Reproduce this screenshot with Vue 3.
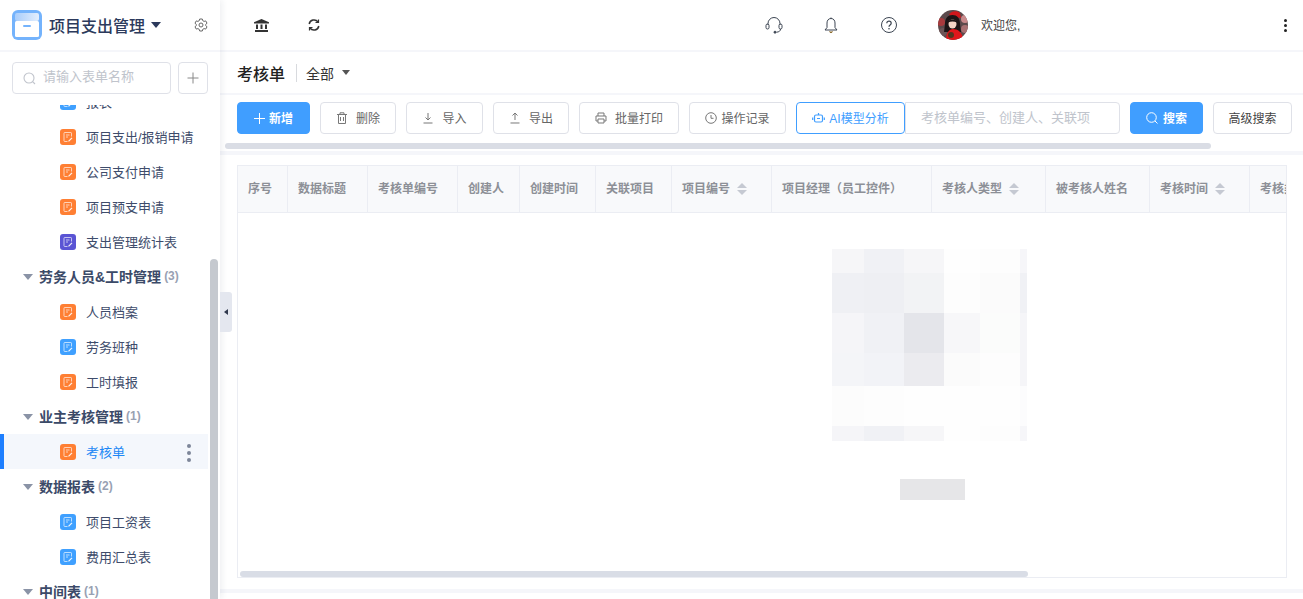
<script setup>
const menu = [
  { type: 'item', name: '报表', color: 'blue' },
  { type: 'item', name: '项目支出/报销申请', color: 'orange' },
  { type: 'item', name: '公司支付申请', color: 'orange' },
  { type: 'item', name: '项目预支申请', color: 'orange' },
  { type: 'item', name: '支出管理统计表', color: 'purple' },
  { type: 'group', name: '劳务人员&工时管理', count: 3 },
  { type: 'item', name: '人员档案', color: 'orange' },
  { type: 'item', name: '劳务班种', color: 'blue' },
  { type: 'item', name: '工时填报', color: 'orange' },
  { type: 'group', name: '业主考核管理', count: 1 },
  { type: 'item', name: '考核单', color: 'orange', active: true },
  { type: 'group', name: '数据报表', count: 2 },
  { type: 'item', name: '项目工资表', color: 'blue' },
  { type: 'item', name: '费用汇总表', color: 'blue' },
  { type: 'group', name: '中间表', count: 1 },
]

const columns = [
  { name: '序号', width: 50 },
  { name: '数据标题', width: 80 },
  { name: '考核单编号', width: 90 },
  { name: '创建人', width: 62 },
  { name: '创建时间', width: 76 },
  { name: '关联项目', width: 76 },
  { name: '项目编号', width: 100, sort: true },
  { name: '项目经理（员工控件）', width: 160 },
  { name: '考核人类型', width: 114, sort: true },
  { name: '被考核人姓名', width: 104 },
  { name: '考核时间', width: 100, sort: true },
  { name: '考核类型', width: 100 },
]

const mosaic = [
  '#f6f6f8', '#f0f1f5', '#f6f6f8', '#fefefe', '#fdfdfd', '#f6f6f9',
  '#eff0f4', '#eeeff3', '#f2f3f5', '#fdfdfd', '#fbfbfb', '#f0f1f5',
  '#f5f5f8', '#f0f1f5', '#e4e5ea', '#f7f7f9', '#fbfcfb', '#f5f5f8',
  '#f4f5f8', '#f2f3f7', '#ebebef', '#fbfbfb', '#fdfdfd', '#f5f5f8',
  '#fcfcfc', '#fdfdfd', '#fefefe', '#fefefe', '#fefefe', '#fcfcfd',
  '#f5f5f8', '#f0f1f5', '#f6f6f8', '#fefefe', '#fdfdfd', '#f6f6f9',
]
</script>

<template>
  <div class="page">
    <aside class="sidebar">
      <div class="brand">
        <svg class="logo" width="30" height="30" viewBox="0 0 30 30">
          <defs>
            <linearGradient id="logoTop" x1="0" y1="0" x2="1" y2="0">
              <stop offset="0" stop-color="#a9cdfb" />
              <stop offset="1" stop-color="#e3eefd" />
            </linearGradient>
          </defs>
          <rect width="30" height="30" rx="6" fill="#74b3fc" />
          <rect x="3" y="3" width="24" height="8" rx="2" fill="url(#logoTop)" />
          <rect x="3" y="11" width="24" height="16" rx="1.500" fill="#fff" />
          <rect x="11" y="15" width="8" height="2" rx="1" fill="#74b3fc" />
        </svg>
        <span class="brand-name">项目支出管理</span>
        <i class="caret dark"></i>
        <svg class="gear" width="14" height="14" viewBox="0 0 14 14" fill="none" stroke="#666" stroke-width="1">
          <path d="M5.700 1h2.600l.4 1.600 1.400.8 1.600-.5 1.300 2.200-1.200 1.200v1.400l1.200 1.200-1.300 2.200-1.600-.5-1.400.8L8.300 13H5.700l-.4-1.600-1.400-.8-1.600.5L1 8.900l1.200-1.200V6.300L1 5.100l1.300-2.200 1.600.5 1.400-.8z" />
          <circle cx="7" cy="7" r="2" />
        </svg>
      </div>

      <div class="search-row">
        <label class="side-search">
          <svg width="13" height="13" viewBox="0 0 13 13" fill="none" stroke="#c0c4cc" stroke-width="1.100">
            <circle cx="6" cy="6" r="5" />
            <path d="M9.600 9.600l2.400 2.400" />
          </svg>
          <input placeholder="请输入表单名称" />
        </label>
        <button class="add-btn">
          <svg width="12" height="12" viewBox="0 0 12 12" stroke="#888" stroke-width="1">
            <path d="M6 .5v11M.5 6h11" />
          </svg>
        </button>
      </div>

      <div class="menu">
        <div class="menu-inner">
          <template v-for="row in menu" :key="row.name">
            <div v-if="row.type === 'group'" class="group">
              <i class="caret gray"></i>
              <span class="group-name">{{ row.name }}</span>
              <span class="group-count">({{ row.count }})</span>
            </div>
            <div v-else class="item" :class="{ active: row.active }">
              <span class="doc" :class="row.color">
                <svg width="10" height="10" viewBox="0 0 10 10" fill="none" stroke="#fff" stroke-opacity=".65" stroke-width="1">
                  <path d="M8.500 4.500V1.200a.7.7 0 0 0-.7-.7H1.700a.7.7 0 0 0-.7.7v7.600c0 .4.300.7.700.7H4.500" />
                  <path d="M3 3h3.500M3 5h2" />
                  <path d="M5.500 9.300l3.500-3.500" stroke-opacity=".9" stroke-width="1.200" />
                </svg>
              </span>
              <span class="item-name">{{ row.name }}</span>
              <span v-if="row.active" class="dots"><b></b><b></b><b></b></span>
            </div>
          </template>
        </div>
      </div>

      <div class="side-thumb"></div>
      <div class="collapse"><i></i></div>
    </aside>

    <main class="main">
      <header class="topbar">
        <div class="top-left">
          <svg width="15" height="13" viewBox="0 0 15 13" fill="#333">
            <path d="M7.500 0L15 3.200V4.500H0V3.200z" />
            <path d="M2 5.500h2v4.500H2zM6.500 5.500h2v4.500h-2zM11 5.500h2v4.500h-2zM1 11h13v2H1z" />
          </svg>
          <svg width="12" height="12" viewBox="0 0 12 12" fill="none" stroke="#333" stroke-width="1.500">
            <path d="M1.200 5A4.900 4.900 0 0 1 10 3M10.800 7A4.900 4.900 0 0 1 2 9" />
            <path d="M10.500.5v3H7.500M1.500 11.500v-3h3" stroke-width="1.200" />
          </svg>
        </div>
        <div class="top-right">
          <svg width="18" height="18" viewBox="0 0 18 18" fill="none" stroke="#3c4552" stroke-width="1">
            <path d="M3 9V7.500a6 6 0 0 1 12 0V9" />
            <rect x="1" y="8" width="3" height="5" rx="1.500" />
            <rect x="14" y="8" width="3" height="5" rx="1.500" />
            <path d="M15.500 13c0 2-1.500 3-4 3.200" />
            <circle cx="10" cy="16.200" r="1" fill="#3c4552" />
          </svg>
          <svg class="bell" width="16" height="17" viewBox="0 0 16 17" fill="none" stroke="#3c4552" stroke-width="1">
            <path d="M8 1.500c-2.600 0-4 2-4 4.500v4.500L2 13h12l-2-2.500V6c0-2.500-1.400-4.500-4-4.500z" />
            <path d="M8 .5v1" />
            <path d="M6.500 14.500c.3.800.8 1.200 1.500 1.200s1.200-.4 1.500-1.200" fill="#8a6a2d" stroke="#8a6a2d" />
          </svg>
          <svg class="help" width="16" height="16" viewBox="0 0 16 16" fill="none" stroke="#3c4552" stroke-width="1">
            <circle cx="8" cy="8" r="7.500" />
            <path d="M5.800 6.200C5.800 5 6.800 4.200 8 4.200s2.200.8 2.200 2c0 1.800-2.200 1.700-2.200 3.500" stroke-width="1.200" />
            <circle cx="8" cy="11.700" r=".8" fill="#3c4552" stroke="none" />
          </svg>
          <div class="user">
            <svg width="30" height="30" viewBox="0 0 30 30">
              <defs>
                <clipPath id="avatarClip"><circle cx="15" cy="15" r="15" /></clipPath>
              </defs>
              <g clip-path="url(#avatarClip)">
                <rect width="30" height="30" fill="#5c4a4c" />
                <circle cx="3" cy="12" r="4" fill="#a83a3d" />
                <circle cx="5" cy="22" r="4" fill="#6d5557" />
                <circle cx="27" cy="9" r="4" fill="#c98a8c" />
                <circle cx="27" cy="19" r="4" fill="#a87072" />
                <path d="M11 5c1-4 8-5 11-2l1 5-7-1z" fill="#d0171c" />
                <path d="M7 14c0-6 3-9 7.500-9S22 8 22 14l1 8H6z" fill="#1d1516" />
                <ellipse cx="14.500" cy="14" rx="4" ry="4.500" fill="#f3d4c5" />
                <path d="M10 12.500c1-4 8-4 9 0-3-1.500-6-1.500-9 0z" fill="#1d1516" />
                <path d="M8 30c0-7 3-11 7-11s10 3 10 11z" fill="#e0161b" />
                <circle cx="13" cy="25" r="3" fill="#54351f" />
              </g>
            </svg>
            <span class="welcome">欢迎您,</span>
          </div>
        </div>
        <span class="top-more"><b></b><b></b><b></b></span>
      </header>

      <div class="title-row">
        <h1>考核单</h1>
        <span class="title-line"></span>
        <span class="scope">全部</span>
        <i class="caret mid"></i>
      </div>

      <div class="toolbar">
        <button class="btn primary add">
          <svg width="11" height="11" viewBox="0 0 11 11" stroke="#fff" stroke-width="1"><path d="M5.500 0v11M0 5.500h11" /></svg>
          <span>新增</span>
        </button>
        <button class="btn">
          <svg width="12" height="12" viewBox="0 0 12 12" fill="none" stroke="#777" stroke-width="1"><path d="M2.500 3v8.500h7V3M1 2.500h10M4 2.500V.8h4v1.700M4.500 5v4M7.500 5v4" /></svg>
          <span>删除</span>
        </button>
        <button class="btn">
          <svg width="12" height="12" viewBox="0 0 12 12" fill="none" stroke="#777" stroke-width="1"><path d="M6 1v7M3.500 5.500L6 8l2.500-2.500M1.500 11h9" /></svg>
          <span>导入</span>
        </button>
        <button class="btn">
          <svg width="12" height="12" viewBox="0 0 12 12" fill="none" stroke="#777" stroke-width="1"><path d="M6 8V1M3.500 3.500L6 1l2.500 2.500M1.500 11h9" /></svg>
          <span>导出</span>
        </button>
        <button class="btn">
          <svg width="12" height="12" viewBox="0 0 12 12" fill="none" stroke="#777" stroke-width="1"><path d="M3 4V1h6v3M3 9H1V4h10v5H9M3 7h6v4H3z" /></svg>
          <span>批量打印</span>
        </button>
        <button class="btn tight">
          <svg width="12" height="12" viewBox="0 0 12 12" fill="none" stroke="#777" stroke-width="1"><circle cx="6" cy="6" r="5.300" /><path d="M6 3v3.300h2.500" /></svg>
          <span>操作记录</span>
        </button>
        <button class="btn ai tight">
          <svg width="13" height="12" viewBox="0 0 13 12" fill="none" stroke="#409eff" stroke-width="1.200"><rect x="2.500" y="3" width="8" height="7" rx="1.500" /><path d="M6.500 1v2M.7 5.500v2.500M12.300 5.500v2.500M5 6.500h3" /></svg>
          <span>AI模型分析</span>
        </button>
        <input class="query" placeholder="考核单编号、创建人、关联项" />
        <button class="btn primary search">
          <svg width="12" height="12" viewBox="0 0 12 12" fill="none" stroke="#fff" stroke-width="1"><circle cx="5.500" cy="5.500" r="4.800" /><path d="M9 9l2.500 2.500" /></svg>
          <span>搜索</span>
        </button>
        <button class="btn advanced"><span>高级搜索</span></button>
      </div>

      <div class="bar-scroll"></div>
      <div class="divider"></div>

      <section class="table">
        <div class="thead">
          <div v-for="col in columns" :key="col.name" class="th" :style="{ width: col.width + 'px' }">
            <span class="th-name">{{ col.name }}</span>
            <span v-if="col.sort" class="sort"><i></i><i></i></span>
          </div>
        </div>
        <div class="empty">
          <div class="mosaic">
            <span v-for="(c, i) in mosaic" :key="i" :style="{ background: c }"></span>
          </div>
          <div class="empty-text"></div>
        </div>
        <div class="table-scroll"></div>
      </section>

      <div class="foot-line"></div>
    </main>
  </div>
</template>

<style>
html, body { margin: 0; height: 100%; overflow: hidden; background: #fff; }
</style>

<style scoped>
.page {
  display: flex;
  width: 1303px;
  height: 599px;
  overflow: hidden;
  font-family: "Liberation Sans", "Noto Sans CJK SC", sans-serif;
  font-size: 12px;
  color: #333;
}
button, input { font-family: inherit; }

.sidebar {
  position: relative;
  flex: 0 0 220px;
  display: flex;
  flex-direction: column;
  background: #fff;
  box-shadow: 2px 0 6px rgba(40, 50, 80, .08);
  z-index: 2;
}
.brand {
  display: flex;
  align-items: center;
  height: 50px;
  padding: 0 12px;
  border-bottom: 2px solid #f5f6fa;
}
.brand-name {
  margin-left: 7px;
  font-size: 16px;
  font-weight: 500;
  color: #2c3a5c;
}
.caret {
  display: block;
  width: 0;
  height: 0;
  border-left: 5px solid transparent;
  border-right: 5px solid transparent;
}
.caret.dark { border-top: 6px solid #2c3a5c; margin-left: 6px; }
.caret.gray { border-top: 6px solid #8a93a6; }
.caret.mid { border-top: 5px solid #555; margin-left: 8px; border-left-width: 4px; border-right-width: 4px; }
.gear { margin-left: auto; }

.search-row {
  display: flex;
  gap: 7px;
  padding: 10px 12px 11px;
}
.side-search {
  display: flex;
  align-items: center;
  gap: 7px;
  box-sizing: border-box;
  width: 159px;
  height: 32px;
  padding: 0 10px;
  border: 1px solid #dfe1e8;
  border-radius: 4px;
}
.side-search input {
  width: 100px;
  padding: 0 0 3px;
  border: 0;
  outline: 0;
  font-size: 13px;
}
input::placeholder { color: #c0c4cc; }
.add-btn {
  display: flex;
  align-items: center;
  justify-content: center;
  width: 30px;
  height: 32px;
  padding: 0;
  background: #fff;
  border: 1px solid #dfe1e8;
  border-radius: 4px;
}

.menu { flex: 1; overflow: hidden; }
.menu-inner { margin-top: -21px; }
.item, .group {
  display: flex;
  align-items: center;
  height: 35px;
}
.group { padding-left: 23px; }
.group-name {
  margin-left: 6px;
  padding-bottom: 2px;
  font-size: 14px;
  font-weight: 700;
  color: #3b4a68;
}
.group-count {
  margin-left: 3px;
  padding-bottom: 1px;
  font-size: 12px;
  font-weight: 700;
  color: #98a1b3;
}
.item { position: relative; width: 208px; padding-left: 60px; box-sizing: border-box; }
.item.active { background: #f4f7fc; box-shadow: inset 4px 0 0 #1e7fff; }
.item.active .item-name { color: #1e88f5; }
.doc {
  display: flex;
  align-items: center;
  justify-content: center;
  width: 16px;
  height: 16px;
  border-radius: 3px;
}
.doc.orange { background: #ff7f33; }
.doc.blue { background: #3fa0ff; }
.doc.purple { background: #5a54d4; }
.item-name {
  margin-left: 10px;
  padding-bottom: 1px;
  font-size: 13px;
  color: #3e4c6b;
}
.dots {
  position: absolute;
  right: 17px;
  top: 10px;
  display: flex;
  flex-direction: column;
  gap: 3px;
}
.dots b { width: 4px; height: 4px; border-radius: 50%; background: #7d8699; }
.side-thumb {
  position: absolute;
  left: 210px;
  top: 259px;
  bottom: -10px;
  width: 8px;
  border-radius: 4px;
  background: #c5c9cf;
}
.collapse {
  position: absolute;
  left: 220px;
  top: 292px;
  display: flex;
  align-items: center;
  justify-content: center;
  width: 12px;
  height: 40px;
  background: #e4e7ef;
  border-radius: 0 3px 3px 0;
}
.collapse i {
  width: 0;
  height: 0;
  border-top: 3px solid transparent;
  border-bottom: 3px solid transparent;
  border-right: 4px solid #30394d;
}

.main {
  flex: 1;
  min-width: 0;
  display: flex;
  flex-direction: column;
}
.topbar {
  display: flex;
  align-items: center;
  flex: 0 0 50px;
  border-bottom: 2px solid #f5f6fa;
  position: relative;
}
.top-left {
  display: flex;
  align-items: center;
  gap: 39px;
  padding-left: 34px;
}
.top-right {
  display: flex;
  align-items: center;
  margin-left: 445px;
  gap: 41px;
}
.bell { margin-left: -1px; }
.help { margin-left: 1px; }
.user {
  display: flex;
  align-items: center;
  gap: 13px;
}
.welcome { padding-bottom: 2px; font-size: 12px; color: #444; }
.top-more {
  position: absolute;
  right: 16px;
  top: 19px;
  display: flex;
  flex-direction: column;
  gap: 2px;
}
.top-more b { width: 3px; height: 3px; border-radius: 50%; background: #222; }

.title-row {
  display: flex;
  align-items: center;
  height: 41px;
  padding-left: 17px;
  border-bottom: 2px solid #f5f6fa;
}
h1 {
  margin: 0;
  font-size: 16px;
  font-weight: 500;
  color: #222;
}
.title-line { width: 1px; height: 18px; margin: 0 9px 0 11px; background: #d8dade; }
.scope { font-size: 14px; color: #333; }

.toolbar {
  display: flex;
  padding: 7px 0 0 17px;
  gap: 10px;
}
.btn {
  display: flex;
  align-items: center;
  justify-content: center;
  gap: 8px;
  box-sizing: border-box;
  height: 32px;
  padding: 0 15px;
  background: #fff;
  border: 1px solid #dfe1e8;
  border-radius: 4px;
  font-size: 12px;
  color: #666;
  white-space: nowrap;
}
.btn span { padding-bottom: 2px; }
.btn:nth-child(2) { width: 76px; }
.btn:nth-child(3) { width: 77px; }
.btn:nth-child(4) { width: 76px; }
.btn:nth-child(5) { width: 100px; }
.btn:nth-child(6) { width: 97px; }
.btn.tight { gap: 4px; }
.btn.primary { background: #409eff; border-color: #409eff; color: #fff; font-weight: 700; }
.btn.primary.add { width: 73px; gap: 4px; }
.btn.ai { width: 109px; border-color: #409eff; color: #409eff; }
.btn.primary.search { width: 73px; gap: 5px; }
.btn.advanced { width: 79px; color: #444; }
.query {
  box-sizing: border-box;
  width: 215px;
  height: 32px;
  margin-left: -10px;
  padding: 0 15px 2px;
  background: #fff;
  border: 1px solid #dfe1e8;
  border-radius: 0 4px 4px 0;
  outline: 0;
  font-size: 13px;
}

.bar-scroll {
  width: 986px;
  height: 6px;
  margin: 9px 0 0 5px;
  background: #dadde5;
  border-radius: 3px;
}
.divider {
  height: 4px;
  margin-top: 2px;
  background: #f5f6fa;
}

.table {
  position: relative;
  box-sizing: border-box;
  width: 1050px;
  height: 413px;
  margin: 10px 0 0 17px;
  border: 1px solid #ebedf3;
  overflow: hidden;
}
.thead {
  display: flex;
  width: 1200px;
  height: 46px;
  background: #f8f9fb;
  border-bottom: 1px solid #ebedf3;
}
.th {
  display: flex;
  align-items: center;
  flex: none;
  box-sizing: border-box;
  padding-left: 10px;
  border-right: 1px solid #ebedf3;
  font-size: 12px;
  font-weight: 700;
  color: #8d9097;
  white-space: nowrap;
}
.th-name { padding-bottom: 3px; }
.sort {
  display: flex;
  flex-direction: column;
  gap: 2px;
  margin-left: 7px;
}
.sort i {
  width: 0;
  height: 0;
  border-left: 5px solid transparent;
  border-right: 5px solid transparent;
  border-bottom: 5px solid #c5c9d2;
}
.sort i:last-child { border-bottom: 0; border-top: 5px solid #c5c9d2; }

.empty { padding: 36px 0 0 594px; }
.mosaic {
  display: grid;
  grid-template-columns: 32px 40px 40px 36px 40px 7px;
  grid-template-rows: 24px 40px 40px 33px 40px 15px;
  width: 195px;
}
.empty-text {
  width: 65px;
  height: 21px;
  margin: 38px 0 0 68px;
  background: #e6e6e8;
}
.table-scroll {
  position: absolute;
  left: 2px;
  bottom: 0;
  width: 788px;
  height: 6px;
  background: #d9dde6;
  border-radius: 3px;
}
.foot-line {
  height: 4px;
  margin-top: 11px;
  background: #f5f6fa;
}
</style>
